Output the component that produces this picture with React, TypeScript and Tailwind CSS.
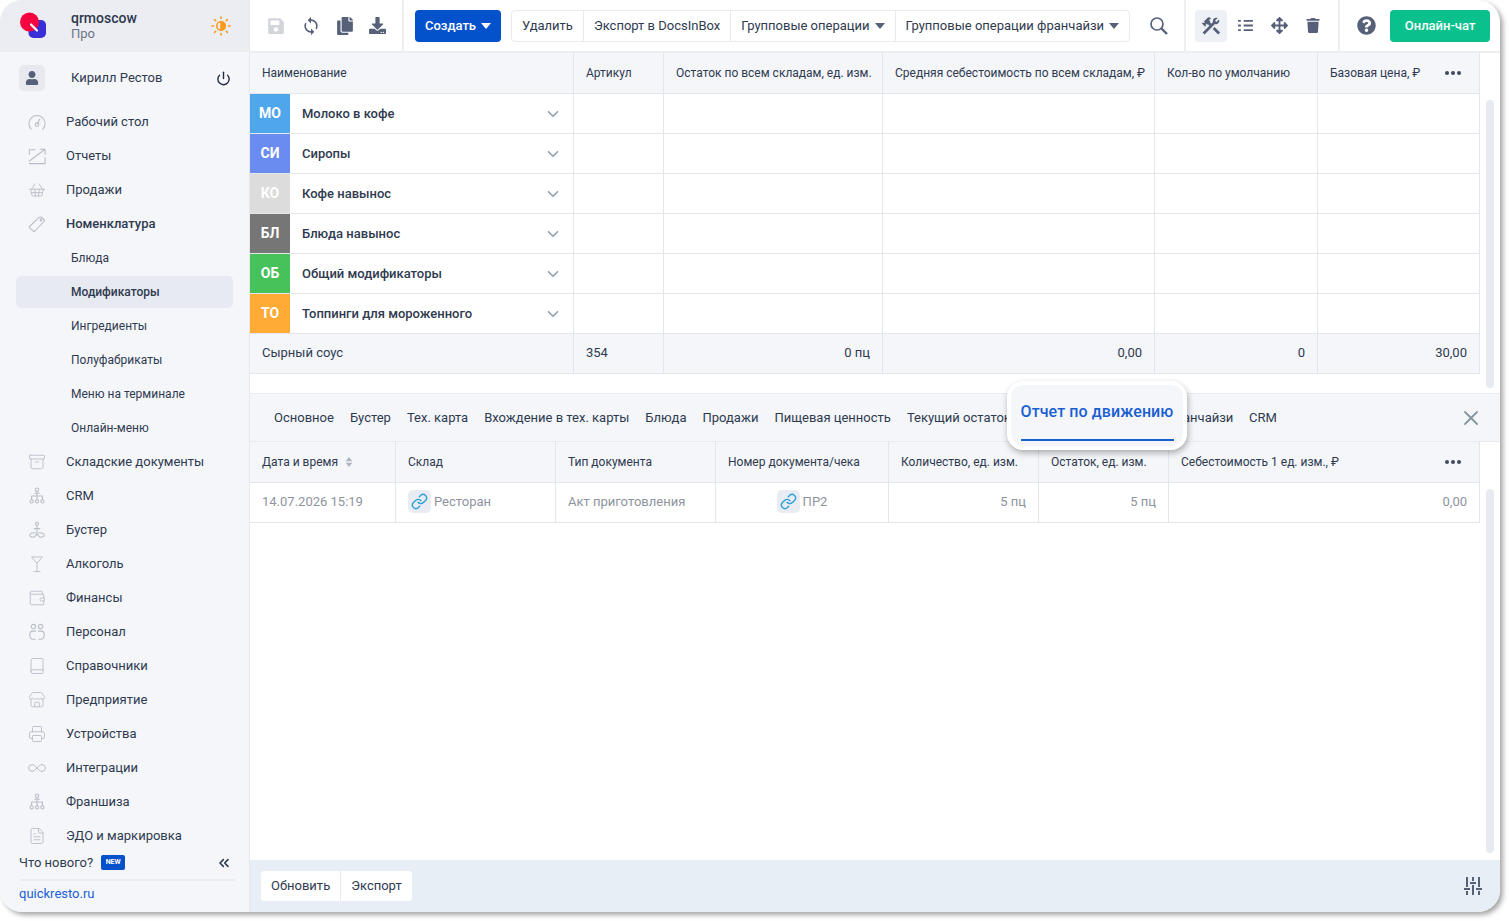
import React from "react";
import { Archive, Book, ChevronDown, ChevronsLeft, FileText, Infinity as InfinityIcon, Link, Martini, Power, Printer, ShoppingBasket, Store, Wallet, X } from "lucide-react";
import { FaSave, FaCopy, FaArrowsAlt, FaTrash, FaQuestionCircle, FaUser, FaDownload } from "react-icons/fa";
import { MdSync, MdConstruction } from "react-icons/md";

const ic = "w-[18px] h-[18px] text-[#b9bdc7]";
const sw = 1.2;

function Custom({ children }: { children: React.ReactNode }) {
  return (
    <svg viewBox="0 0 20 20" className={ic} fill="none" stroke="currentColor" strokeWidth={sw} strokeLinecap="round" strokeLinejoin="round">
      {children}
    </svg>
  );
}

const GaugeIcon = () => (
  <Custom>
    <path d="M3.500 18a9 9 0 1 1 13 0" />
    <path d="M10.500 12l2.500-5" />
    <circle cx="10" cy="13" r="2" />
  </Custom>
);
const Booster = () => (
  <Custom>
    <circle cx="10" cy="3" r="1.700" />
    <path d="M10 5v8M7 8.500h6M8 13c-3 0-6 .8-6 2.500S4 18 6 18s3-2 4-4c1 2 2 4 4 4s4-1 4-2.500S15 13 12 13" />
  </Custom>
);
const Trend = () => (
  <Custom>
    <path d="M13.500 2.500H19V8M19 2.500L1.500 15.500M1.500 3h6M1.500 3v5M1.500 18.500H19V12" />
  </Custom>
);
const TagIcon = () => (
  <Custom>
    <path d="M2 12.500L12 3c1-1 2-1 3-.5l2.500 2c1 1 1 2 0 3L8 17.500c-.8.8-1.700.8-2.500 0l-3.500-3c-.7-.7-.7-1.300 0-2z" />
    <circle cx="14.500" cy="5.500" r="1" />
  </Custom>
);
const Tree = () => (
  <Custom>
    <circle cx="10" cy="3" r="1.900" />
    <path d="M10 5v5M7.500 7h5M4 14v-4h12v4M10 10v4" />
    <circle cx="4" cy="16" r="1.800" />
    <circle cx="10" cy="16" r="1.800" />
    <circle cx="16" cy="16" r="1.800" />
  </Custom>
);
const People = () => (
  <Custom>
    <circle cx="6" cy="4" r="2.500" />
    <circle cx="14" cy="4" r="2.500" />
    <path d="M8.500 9H5c-2 0-3 1.500-3 4s1 5 3.500 5H8M11.500 9H15c2 0 3 1.500 3 4s-1 5-3.500 5H12" />
  </Custom>
);

const menu: { label: string; icon: React.ReactNode; bold?: boolean; sub?: boolean; active?: boolean }[] = [
  { label: "Рабочий стол", icon: <GaugeIcon /> },
  { label: "Отчеты", icon: <Trend /> },
  { label: "Продажи", icon: <ShoppingBasket className={ic} strokeWidth={sw} /> },
  { label: "Номенклатура", icon: <TagIcon />, bold: true },
  { label: "Блюда", icon: null, sub: true },
  { label: "Модификаторы", icon: null, sub: true, active: true },
  { label: "Ингредиенты", icon: null, sub: true },
  { label: "Полуфабрикаты", icon: null, sub: true },
  { label: "Меню на терминале", icon: null, sub: true },
  { label: "Онлайн-меню", icon: null, sub: true },
  { label: "Складские документы", icon: <Archive className={ic} strokeWidth={sw} /> },
  { label: "CRM", icon: <Tree /> },
  { label: "Бустер", icon: <Booster /> },
  { label: "Алкоголь", icon: <Martini className={ic} strokeWidth={sw} /> },
  { label: "Финансы", icon: <Wallet className={ic} strokeWidth={sw} /> },
  { label: "Персонал", icon: <People /> },
  { label: "Справочники", icon: <Book className={ic} strokeWidth={sw} /> },
  { label: "Предприятие", icon: <Store className={ic} strokeWidth={sw} /> },
  { label: "Устройства", icon: <Printer className={ic} strokeWidth={sw} /> },
  { label: "Интеграции", icon: <InfinityIcon className="w-[20px] h-[20px] -ml-[1px] text-[#b9bdc7]" strokeWidth={sw} /> },
  { label: "Франшиза", icon: <Tree /> },
  { label: "ЭДО и маркировка", icon: <FileText className={ic} strokeWidth={sw} /> },
];

const groups = [
  { code: "МО", name: "Молоко в кофе", color: "bg-[#4fa6ea]" },
  { code: "СИ", name: "Сиропы", color: "bg-[#6a8bf0]" },
  { code: "КО", name: "Кофе навынос", color: "bg-[#dcdcdc]" },
  { code: "БЛ", name: "Блюда навынос", color: "bg-[#767676]" },
  { code: "ОБ", name: "Общий модификаторы", color: "bg-[#47c15a]" },
  { code: "ТО", name: "Топпинги для мороженного", color: "bg-[#ffab36]" },
];

const topCols = "grid grid-cols-[324px_90px_219px_272px_163px_162px] w-[1230px]";
const botCols = "grid grid-cols-[146px_160px_160px_173px_150px_130px_311px] w-[1230px]";
const cell = "border-r border-[#e3e6ea] flex items-center px-3 min-w-0";
const tabs = ["Основное", "Бустер", "Тех. карта", "Вхождение в тех. карты", "Блюда", "Продажи", "Пищевая ценность", "Текущий остаток"];

function Sun() {
  return (
    <svg viewBox="0 0 20 20" className="w-[20px] h-[20px]" fill="none" stroke="#fb9a1f" strokeWidth="1.600" strokeLinecap="round">
      <circle cx="10" cy="10" r="4.200" />
      <path d="M10 5.800a4.200 4.200 0 0 1 0 8.400z" fill="#fb9a1f" />
      <path d="M10 1v1.500M10 17.500V19M1 10h1.500M17.500 10H19M3.600 3.600l1.100 1.100M15.300 15.300l1.100 1.100M3.600 16.400l1.100-1.100M15.300 4.700l1.100-1.100" />
    </svg>
  );
}

function Logo() {
  return (
    <svg viewBox="0 0 28 28" className="w-[28px] h-[28px]">
      <rect x="9.500" y="8" width="17.500" height="18" rx="5" fill="#3a2fd6" />
      <circle cx="10.500" cy="10" r="9.500" fill="#f5053f" />
      <path d="M12 12.500l6 6" stroke="#fff" strokeWidth="2.200" strokeLinecap="round" />
    </svg>
  );
}

function Sliders() {
  return (
    <svg viewBox="0 0 18 18" className="w-[18px] h-[18px]" stroke="#566179" strokeWidth="2" fill="none">
      <path d="M3 0v10M3 14v4M9 0v4M9 8v10M15 0v10M15 14v4M0 12h6M6 6h6M12 12h6" />
    </svg>
  );
}

function ListIcon() {
  return (
    <svg viewBox="0 0 16 14" className="ml-[11px] w-[15px] h-[13px]" stroke="#566179" strokeWidth="2" fill="none">
      <path d="M0 2h3M6 2h10M0 7h3M6 7h10M0 12h3M6 12h10" />
    </svg>
  );
}

function SearchIcon() {
  return (
    <svg viewBox="0 0 18 18" className="ml-[20px] w-[18px] h-[18px]" stroke="#566179" fill="none">
      <circle cx="7" cy="7" r="6" strokeWidth="1.700" />
      <path d="M11.500 11.500L17 17" strokeWidth="2.400" />
    </svg>
  );
}

function Caret({ color = "#566179" }: { color?: string }) {
  return (
    <svg viewBox="0 0 10 6" className="w-[10px] h-[6px]" fill={color}>
      <path d="M0 0h10L5 6z" />
    </svg>
  );
}

function Dots() {
  return (
    <span className="flex gap-[2px]">
      <i className="w-[4px] h-[4px] rounded-full bg-[#3f4a5f]" />
      <i className="w-[4px] h-[4px] rounded-full bg-[#3f4a5f]" />
      <i className="w-[4px] h-[4px] rounded-full bg-[#3f4a5f]" />
    </span>
  );
}

function LinkBadge() {
  return (
    <span className="w-[23px] h-[23px] rounded-[5px] bg-[#e9edf3] flex items-center justify-center mr-[3px]">
      <Link className="w-[17px] h-[17px] text-[#2ea0d8]" strokeWidth={2} />
    </span>
  );
}

export default function App() {
  return (
    <div className="w-[1509px] h-[921px] bg-white overflow-hidden font-['Roboto',sans-serif] text-[13px] text-[#2f3a4f]">
      <div className="w-[1500px] h-[912px] rounded-[22px] overflow-hidden flex bg-white shadow-[3px_3px_5px_rgba(0,0,0,0.35)]">
        <aside className="w-[250px] shrink-0 bg-[#f4f6fa] border-r border-[#e6e8ec] flex flex-col">
          <div className="h-[52px] bg-[#ebedf2] flex items-center pl-[19px] pr-[18px] shrink-0">
            <Logo />
            <div className="ml-[24px] flex-1 leading-[15px]">
              <div className="font-medium text-[#2f3a4f] text-[14px]">qrmoscow</div>
              <div className="text-[#6b7485]">Про</div>
            </div>
            <Sun />
          </div>
          <div className="h-[52px] flex items-center pl-[19px] pr-[18px] shrink-0">
            <span className="w-[26px] h-[26px] rounded-[5px] bg-[#e7e9ef] flex items-center justify-center">
              <FaUser className="w-[14px] h-[14px] text-[#566179]" />
            </span>
            <span className="ml-[26px] flex-1">Кирилл Рестов</span>
            <Power className="w-[15px] h-[15px] text-[#1f2a40]" strokeWidth={2.200} />
          </div>
          <nav className="flex-1 min-h-0 overflow-hidden px-4 pt-[1px]">
            {menu.map((m) => (
              <div key={m.label} className="h-[34px] flex items-center">
                {m.sub ? (
                  <span className={`w-full h-[32px] flex items-center pl-[55px] text-[12px] ${m.active ? "bg-[#e7eaf1] rounded-[5px] font-medium" : ""}`}>{m.label}</span>
                ) : (
                  <>
                    <span className="w-[50px] pl-[12px] flex items-center">{m.icon}</span>
                    <span className={m.bold ? "font-medium" : ""}>{m.label}</span>
                  </>
                )}
              </div>
            ))}
          </nav>
          <div className="pl-[19px] pr-[14px] shrink-0 h-[60px]">
            <div className="h-[29px] pb-[6px] flex items-center border-b-2 border-[#ebedf2]">
              <span>Что нового?</span>
              <span className="ml-[8px] w-[24px] h-[15px] rounded-[2px] bg-[#0451cc] text-white text-[7px] font-bold flex items-center justify-center">NEW</span>
              <ChevronsLeft className="ml-auto mr-[3px] w-[16px] h-[16px] text-[#2f3a4f]" strokeWidth={2.400} />
            </div>
            <div className="h-[25px] flex items-center text-[#2160d4]">quickresto.ru</div>
          </div>
        </aside>

        <main className="flex-1 min-w-0 flex flex-col relative">
          <header className="h-[53px] border-b-2 border-[#eceef2] flex items-center shrink-0">
            <div className="w-[154px] h-full border-r-2 border-[#eceef2] flex items-center pl-[17px] gap-[16px]">
              <FaSave className="w-[18px] h-[18px] text-[#d2d5da]" />
              <MdSync className="w-[20px] h-[20px] text-[#566179]" />
              <FaCopy className="w-[16px] h-[18px] text-[#566179]" />
              <FaDownload className="w-[17px] h-[17px] text-[#566179]" />
            </div>
            <button className="ml-[11px] h-[32px] w-[86px] rounded-[4px] bg-[#0451cc] text-white font-medium flex items-center justify-center gap-[5px]">
              Создать <Caret color="#ffffff" />
            </button>
            <div className="ml-[10px] h-[32px] flex items-center rounded-[4px] border border-[#e8eaee] text-[#2f3a4f]">
              <span className="px-[10px] h-full flex items-center border-r border-[#e8eaee]">Удалить</span>
              <span className="px-[10px] h-full flex items-center border-r border-[#e8eaee]">Экспорт в DocsInBox</span>
              <span className="px-[10px] h-full flex items-center gap-[5px] border-r border-[#e8eaee]">Групповые операции <Caret /></span>
              <span className="px-[10px] h-full flex items-center gap-[5px]">Групповые операции франчайзи <Caret /></span>
            </div>
            <SearchIcon />
            <div className="ml-[16px] w-[156px] h-full border-x-2 border-[#eceef2] flex items-center pl-[9px]">
              <span className="w-[32px] h-[32px] rounded-[4px] bg-[#edf0f5] flex items-center justify-center"><MdConstruction className="w-[22px] h-[22px] text-[#566179]" /></span>
              <ListIcon />
              <FaArrowsAlt className="ml-[18px] w-[17px] h-[17px] text-[#566179]" />
              <FaTrash className="ml-[18px] w-[14px] h-[15px] text-[#566179]" />
            </div>
            <FaQuestionCircle className="ml-[17px] w-[19px] h-[19px] text-[#566179]" />
            <button className="ml-[14px] w-[100px] h-[32px] rounded-[4px] bg-[#0ac18e] text-white font-medium">Онлайн-чат</button>
          </header>

          <section className="h-[340px] shrink-0 relative">
            <div className={`${topCols} h-[41px] bg-[#f4f6fa] border-b border-[#e3e6ea] text-[12px]`}>
              {["Наименование", "Артикул", "Остаток по всем складам, ед. изм.", "Средняя себестоимость по всем складам, ₽", "Кол-во по умолчанию"].map((h) => (
                <div key={h} className={`${cell} whitespace-nowrap`}>{h}</div>
              ))}
              <div className={`${cell} justify-between whitespace-nowrap pr-[18px]`}>Базовая цена, ₽ <Dots /></div>
            </div>
            {groups.map((g) => (
              <div key={g.code} className={`${topCols} h-[40px] border-b border-[#e3e6ea]`}>
                <div className="border-r border-[#e3e6ea] flex items-center">
                  <span className={`${g.color} w-[40px] h-full flex items-center justify-center text-white font-bold text-[14px]`}>{g.code}</span>
                  <span className="ml-[12px] font-medium flex-1">{g.name}</span>
                  <ChevronDown className="mr-[11px] w-[18px] h-[18px] text-[#8fa2b1]" strokeWidth={2.200} />
                </div>
                <div className={cell} /><div className={cell} /><div className={cell} /><div className={cell} /><div className={cell} />
              </div>
            ))}
            <div className={`${topCols} h-[40px] bg-[#f4f6fa] border-b border-[#e3e6ea]`}>
              <div className={`${cell} pb-[2px]`}>Сырный соус</div>
              <div className={`${cell} pb-[2px]`}>354</div>
              <div className={`${cell} pb-[2px] justify-end`}>0 пц</div>
              <div className={`${cell} pb-[2px] justify-end`}>0,00</div>
              <div className={`${cell} pb-[2px] justify-end`}>0</div>
              <div className={`${cell} pb-[2px] justify-end`}>30,00</div>
            </div>
            <div className="absolute left-[1236px] top-[47px] w-[8px] h-[288px] rounded-full bg-[#e7eaf0]" />
          </section>

          <section className="h-[49px] shrink-0 bg-[#f4f6fa] border-y border-[#e8eaee] flex items-center pl-[24px] gap-[16px] relative">
            {tabs.map((t) => <span key={t} className="whitespace-nowrap">{t}</span>)}
            <span className="absolute left-[933px] whitespace-nowrap">анчайзи</span>
            <span className="absolute left-[999px]">CRM</span>
            <X className="absolute right-[17px] w-[24px] h-[24px] text-[#8494a0]" strokeWidth={1.800} />
          </section>

          <section className="flex-1 min-h-0 relative">
            <div className={`${botCols} h-[41px] bg-[#f4f6fa] border-b border-[#e3e6ea] text-[12px]`}>
              <div className={`${cell} gap-[7px] whitespace-nowrap`}>Дата и время
                <svg viewBox="0 0 8 12" className="w-[8px] h-[10px]" fill="#aeb5c0"><path d="M4 0l4 5H0zM4 12l4-5H0z" /></svg>
              </div>
              {["Склад", "Тип документа", "Номер документа/чека", "Количество, ед. изм.", "Остаток, ед. изм."].map((h) => (
                <div key={h} className={`${cell} whitespace-nowrap`}>{h}</div>
              ))}
              <div className={`${cell} justify-between whitespace-nowrap pr-[18px]`}>Себестоимость 1 ед. изм., ₽ <Dots /></div>
            </div>
            <div className={`${botCols} h-[40px] border-b border-[#e3e6ea] text-[#8e949e]`}>
              <div className={`${cell} pb-[2px]`}>14.07.2026 15:19</div>
              <div className={`${cell} pb-[2px]`}><LinkBadge />Ресторан</div>
              <div className={`${cell} pb-[2px]`}>Акт приготовления</div>
              <div className={`${cell} pb-[2px] justify-center`}><LinkBadge />ПР2</div>
              <div className={`${cell} pb-[2px] justify-end`}>5 пц</div>
              <div className={`${cell} pb-[2px] justify-end`}>5 пц</div>
              <div className={`${cell} pb-[2px] justify-end`}>0,00</div>
            </div>
            <div className="absolute left-[1236px] top-[47px] w-[8px] h-[364px] rounded-full bg-[#e7eaf0]" />
          </section>

          <footer className="h-[52px] shrink-0 bg-[#e8eef5] flex items-center pl-[11px] pr-[18px]">
            <div className="h-[30px] bg-white rounded-[3px] flex items-center">
              <span className="px-[10px] h-full flex items-center border-r border-[#e8eaee]">Обновить</span>
              <span className="px-[10px]">Экспорт</span>
            </div>
            <span className="ml-auto"><Sliders /></span>
          </footer>

          <div className="absolute left-[757px] top-[381px] w-[180px] h-[69px] rounded-[16px] border-4 border-white bg-[#f4f6fa] shadow-[1px_3px_6px_rgba(0,0,0,0.3)] flex flex-col items-center">
            <span className="mt-[17px] text-[16px] leading-[20px] font-medium tracking-[0.1px] text-[#1a5fd0] whitespace-nowrap">Отчет по движению</span>
            <span className="mt-[17px] w-[153px] h-[2px] bg-[#1a5fd0]" />
          </div>
        </main>
      </div>
    </div>
  );
}
